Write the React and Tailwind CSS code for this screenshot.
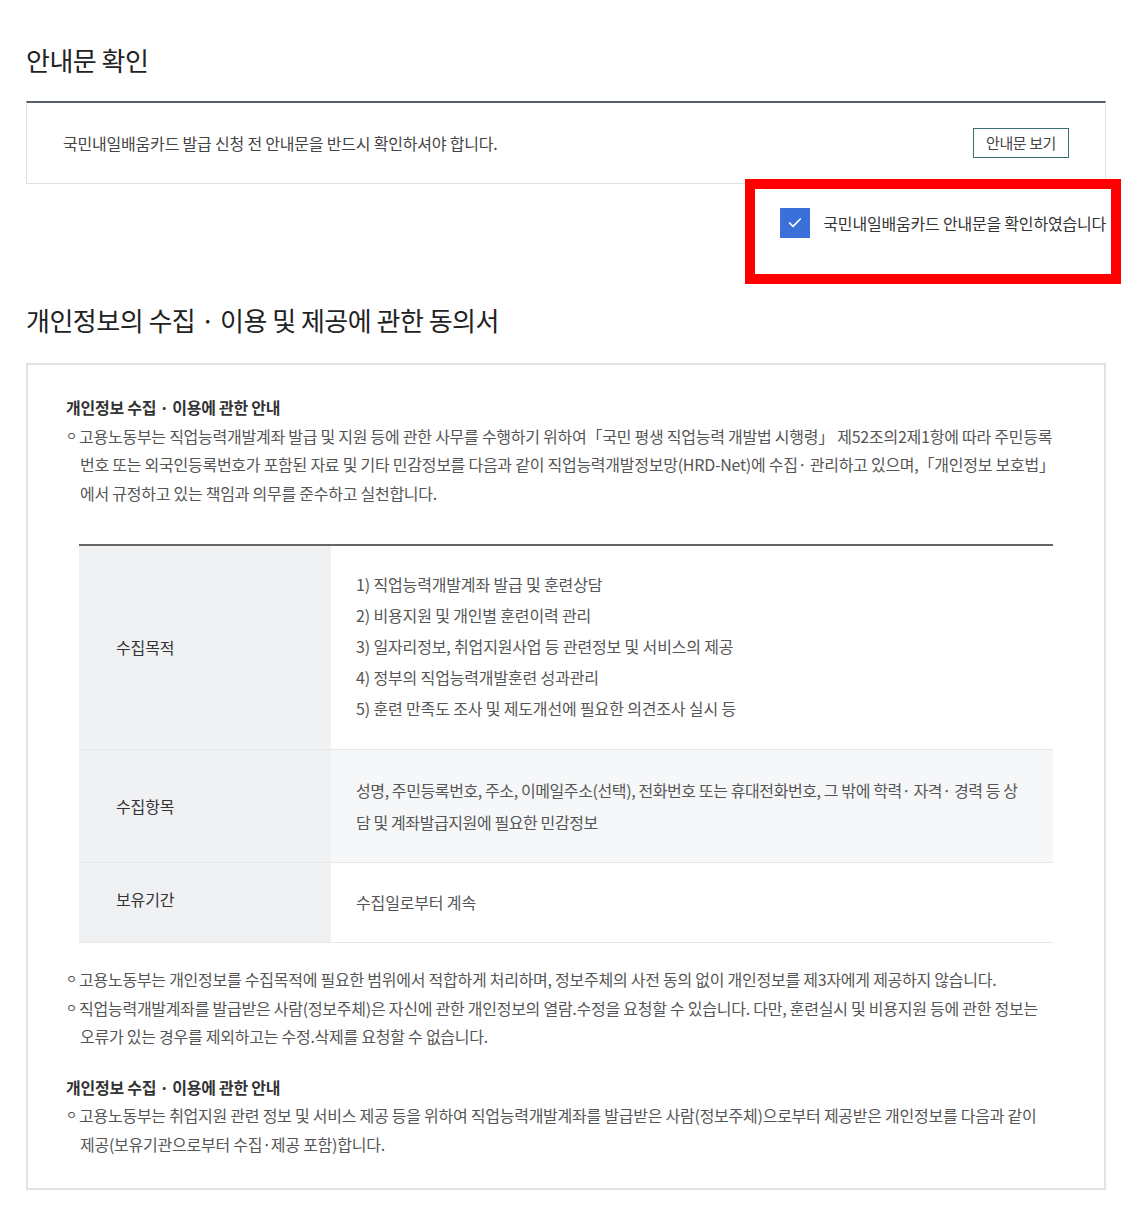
import { Check } from "lucide-react";

const purposes = [
    "1) 직업능력개발계좌 발급 및 훈련상담",
    "2) 비용지원 및 개인별 훈련이력 관리",
    "3) 일자리정보, 취업지원사업 등 관련정보 및 서비스의 제공",
    "4) 정부의 직업능력개발훈련 성과관리",
    "5) 훈련 만족도 조사 및 제도개선에 필요한 의견조사 실시 등",
];

function Bullet({ lines }) {
    return (
        <div className="flex flex-row">
            <span className="w-[13px] shrink-0 text-[12px]">ㅇ</span>
            <div className="flex flex-col">
                {lines.map((l, i) => (
                    <span key={i} className={`whitespace-nowrap ${i > 0 ? "pl-px" : ""}`}>{l}</span>
                ))}
            </div>
        </div>
    );
}

export default function App() {
    return (
        <div className="w-[1126px] bg-white pl-[26px] pr-[20px] pt-[42px] pb-[19px] text-[#444] font-['Noto_Sans_CJK_KR','Noto_Sans',sans-serif]">
            <h2 className="text-[26px] leading-9 tracking-[-0.5px] text-[#222]">안내문 확인</h2>

            <div className="mt-[23px] flex flex-row items-center justify-between h-[83px] border-t-2 border-t-[#585e6b] border-x border-b border-[#e1e1e1] pl-[36px] pr-[36px]">
                <span className="text-[16px] tracking-[-0.2px] text-[#444]">국민내일배움카드 발급 신청 전 안내문을 반드시 확인하셔야 합니다.</span>
                <button className="w-[96px] h-[30px] border border-[#3b6f73] text-[15px] tracking-[-0.4px] text-[#444]">안내문 보기</button>
            </div>

            <div className="relative mt-[24px] flex flex-row justify-end items-center h-[30px]">
                <div className="flex flex-row items-center gap-[13px]">
                    <span className="w-[30px] h-[30px] bg-[#3b6fd9] flex items-center justify-center">
                        <Check className="w-[16px] h-[16px] text-white" strokeWidth={2.5} />
                    </span>
                    <span className="text-[16px] tracking-[-0.2px] text-[#333] whitespace-nowrap">국민내일배움카드 안내문을 확인하였습니다</span>
                </div>
                <div className="absolute top-[-29px] right-[-15px] w-[376px] h-[105px] border-[10px] border-[#ff0000] pointer-events-none" />
            </div>

            <h2 className="mt-[64px] text-[26px] leading-9 tracking-[-0.5px] text-[#222]">개인정보의 수집 · 이용 및 제공에 관한 동의서</h2>

            <div className="mt-[25px] border-2 border-[#dfe3e6] pl-[38px] pr-[38px] pt-[28px] pb-[30px] text-[16px] leading-[28.5px] tracking-[-0.25px] text-[#555]">
                <p className="font-semibold text-[#333]">개인정보 수집 · 이용에 관한 안내</p>
                <Bullet lines={[
                    "고용노동부는 직업능력개발계좌 발급 및 지원 등에 관한 사무를 수행하기 위하여「국민 평생 직업능력 개발법 시행령」 제52조의2제1항에 따라 주민등록",
                    "번호 또는 외국인등록번호가 포함된 자료 및 기타 민감정보를 다음과 같이 직업능력개발정보망(HRD-Net)에 수집· 관리하고 있으며,「개인정보 보호법」",
                    "에서 규정하고 있는 책임과 의무를 준수하고 실천합니다.",
                ]} />

                <div className="mx-[13px] mt-[37px] border-t-2 border-[#666] tracking-[-0.15px]">
                    <div className="flex flex-row border-b border-[#e4e6e8]">
                        <div className="w-[252px] shrink-0 bg-[#f0f1f3] pl-[37px] flex items-center text-[#333]">수집목적</div>
                        <div className="flex-1 pl-[25px] pt-[23px] pb-[25px] flex flex-col leading-[31px]">
                            {purposes.map((p) => <span key={p}>{p}</span>)}
                        </div>
                    </div>
                    <div className="flex flex-row border-b border-[#e4e6e8]">
                        <div className="w-[252px] shrink-0 bg-[#f0f1f3] pl-[37px] flex items-center text-[#333]">수집항목</div>
                        <div className="flex-1 bg-[#f5f7f9] pl-[25px] py-[24px] flex flex-col leading-[32px] tracking-[-0.4px]">
                            <span className="whitespace-nowrap">성명, 주민등록번호, 주소, 이메일주소(선택), 전화번호 또는 휴대전화번호, 그 밖에 학력· 자격· 경력 등 상</span>
                            <span>담 및 계좌발급지원에 필요한 민감정보</span>
                        </div>
                    </div>
                    <div className="flex flex-row border-b border-[#e4e6e8] h-[80px]">
                        <div className="w-[252px] shrink-0 bg-[#f0f1f3] pl-[37px] flex items-center text-[#333] pb-[6px]">보유기간</div>
                        <div className="flex-1 pl-[25px] flex items-center">수집일로부터 계속</div>
                    </div>
                </div>

                <div className="mt-[22px]">
                    <Bullet lines={["고용노동부는 개인정보를 수집목적에 필요한 범위에서 적합하게 처리하며, 정보주체의 사전 동의 없이 개인정보를 제3자에게 제공하지 않습니다."]} />
                    <Bullet lines={[
                        "직업능력개발계좌를 발급받은 사람(정보주체)은 자신에 관한 개인정보의 열람.수정을 요청할 수 있습니다. 다만, 훈련실시 및 비용지원 등에 관한 정보는",
                        "오류가 있는 경우를 제외하고는 수정.삭제를 요청할 수 없습니다.",
                    ]} />
                </div>

                <p className="mt-[22px] font-semibold text-[#333]">개인정보 수집 · 이용에 관한 안내</p>
                <Bullet lines={[
                    "고용노동부는 취업지원 관련 정보 및 서비스 제공 등을 위하여 직업능력개발계좌를 발급받은 사람(정보주체)으로부터 제공받은 개인정보를 다음과 같이",
                    "제공(보유기관으로부터 수집·제공 포함)합니다.",
                ]} />
            </div>
        </div>
    );
}
